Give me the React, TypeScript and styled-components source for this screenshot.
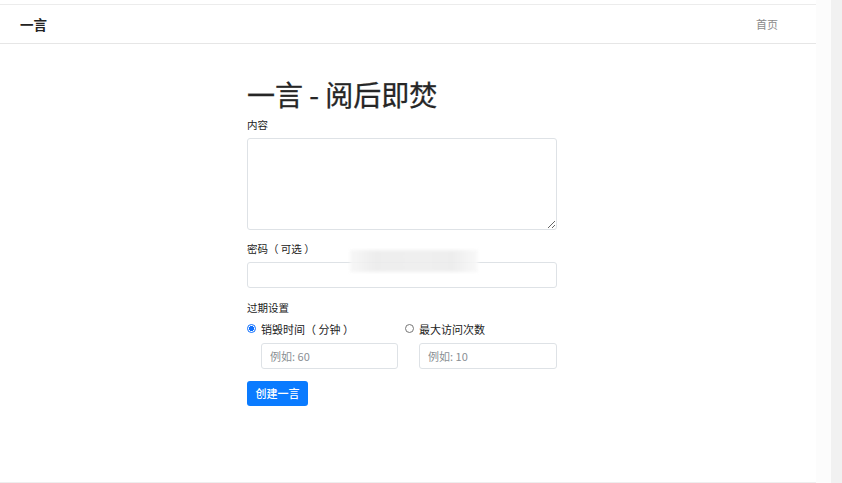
import React, { useState } from 'react';
import styled, { createGlobalStyle } from 'styled-components';

const GlobalStyle = createGlobalStyle`
  * { box-sizing: border-box; }
  html, body { margin: 0; padding: 0; background: #fff; }
  body {
    font-family: "Noto Sans CJK SC", "Noto Sans", "Liberation Sans", sans-serif;
    color: #212529;
  }
`;

const Shell = styled.div`
  display: flex;
  height: 483px;
  overflow: hidden;
`;

const Page = styled.div`
  width: 816px;
  display: flex;
  flex-direction: column;
  padding-top: 4px;
`;

const Gutter = styled.div`
  width: 15px;
  background: #fcfcfc;
`;

const ScrollTrack = styled.div`
  width: 11px;
  background: #f1f1f1;
`;

const Navbar = styled.header`
  height: 40px;
  display: flex;
  align-items: center;
  justify-content: space-between;
  padding: 0 38px 0 20px;
  border-top: 1px solid #ececec;
  border-bottom: 1px solid #e6e6e6;
`;

const Brand = styled.a`
  font-size: 13.5px;
  font-weight: 600;
  color: #222;
  text-decoration: none;
`;

const NavLink = styled.a`
  font-size: 11px;
  color: #8a8a8a;
  text-decoration: none;
`;

const Main = styled.main`
  flex: 1;
  border-bottom: 1px solid #eeeeee;
`;

const Form = styled.form`
  width: 310px;
  margin: 34px 0 0 247px;
  display: flex;
  flex-direction: column;
`;

const Title = styled.h1`
  margin: 0 0 5px;
  font-size: 28px;
  line-height: 1.2;
  font-weight: 400;
  color: #262626;
  -webkit-text-stroke: 0.3px #262626;
  white-space: pre;
`;

const Field = styled.div<{ $gap?: number }>`
  position: relative;
  display: flex;
  flex-direction: column;
  margin-bottom: ${p => p.$gap ?? 0}px;
`;

const Label = styled.label`
  font-size: 10.5px;
  line-height: 16px;
  color: #222;
  margin-bottom: 5px;
  white-space: pre;
`;

const TextArea = styled.textarea`
  height: 92px;
  border: 1px solid #dee2e6;
  border-radius: 3px;
  font: inherit;
  padding: 4px 8px;
  resize: vertical;
`;

const Input = styled.input`
  height: 26px;
  border: 1px solid #dee2e6;
  border-radius: 3px;
  font: inherit;
  font-size: 11px;
  padding: 0 8px;
  color: #212529;
  &::placeholder { color: #8a8f94; }
`;

const Smudge = styled.div`
  position: absolute;
  left: 103px;
  top: 9px;
  width: 128px;
  height: 22px;
  background: linear-gradient(90deg, #f6f6f6 0%, #ececec 20%, #eeeeee 55%, #ececec 80%, #f8f8f8 100%);
  filter: blur(1.5px);
  opacity: 0.9;
`;

const Options = styled.div`
  display: grid;
  grid-template-columns: 151px 152px;
  column-gap: 7px;
  margin-bottom: 12px;
`;

const Option = styled.div`
  display: flex;
  flex-direction: column;
`;

const RadioRow = styled.label`
  display: flex;
  align-items: center;
  gap: 5px;
  font-size: 11px;
  line-height: 16px;
  color: #222;
  margin-bottom: 6px;
  white-space: pre;
`;

const Radio = styled.input`
  appearance: none;
  margin: 0;
  width: 9px;
  height: 9px;
  border-radius: 50%;
  border: 1px solid #767676;
  background: #fff;
  &:checked {
    border: 1px solid #0d6efd;
    background: radial-gradient(circle, #0d6efd 0 2.3px, #fff 2.6px);
  }
`;

const OptionInput = styled(Input)`
  margin-left: 14px;
  height: 26px;
`;

const SubmitButton = styled.button`
  align-self: flex-start;
  height: 25px;
  padding: 0 8.5px;
  border: none;
  border-radius: 3px;
  background: #0a7bff;
  color: #fff;
  font: inherit;
  font-size: 11px;
  font-weight: 500;
`;

export default function App() {
  const [mode, setMode] = useState<'time' | 'count'>('time');
  return (
    <>
      <GlobalStyle />
      <Shell>
        <Page>
          <Navbar>
            <Brand href="#">一言</Brand>
            <NavLink href="#">首页</NavLink>
          </Navbar>
          <Main>
            <Form onSubmit={e => e.preventDefault()}>
              <Title>{'一言 - 阅后即焚'}</Title>
              <Field $gap={11}>
                <Label>内容</Label>
                <TextArea />
              </Field>
              <Field $gap={12}>
                <Label>{'密码（ 可选 ）'}</Label>
                <Input type="password" />
                <Smudge />
              </Field>
              <Label>过期设置</Label>
              <Options>
                <Option>
                  <RadioRow>
                    <Radio type="radio" name="mode" checked={mode === 'time'} onChange={() => setMode('time')} />
                    {'销毁时间（ 分钟 ）'}
                  </RadioRow>
                  <OptionInput placeholder="例如: 60" />
                </Option>
                <Option>
                  <RadioRow>
                    <Radio type="radio" name="mode" checked={mode === 'count'} onChange={() => setMode('count')} />
                    最大访问次数
                  </RadioRow>
                  <OptionInput placeholder="例如: 10" />
                </Option>
              </Options>
              <SubmitButton type="submit">创建一言</SubmitButton>
            </Form>
          </Main>
        </Page>
        <Gutter />
        <ScrollTrack />
      </Shell>
    </>
  );
}
